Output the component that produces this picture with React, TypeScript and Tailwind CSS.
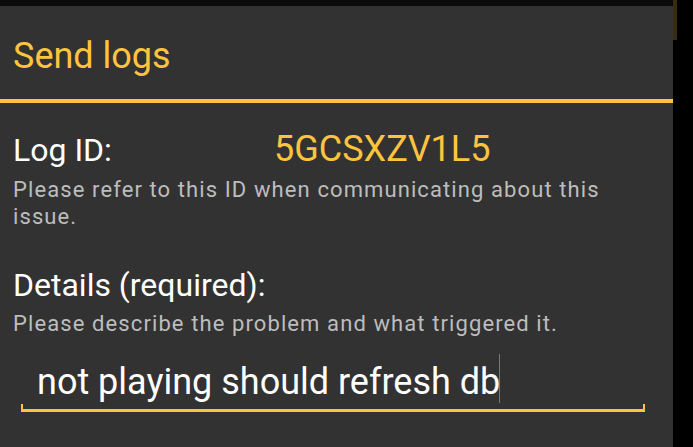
import React from "react";

export default function App() {
  const font = { fontFamily: "Roboto, 'Noto Sans', sans-serif" };
  return (
    <div className="w-[693px] h-[447px] bg-black flex overflow-hidden" style={font}>
      <div className="w-[673px] h-full flex flex-col">
        <div className="h-[6px] bg-[#0b0b0b]" />
        <div className="flex-1 bg-[#323232] flex flex-col">
          <div className="pt-[30px] pb-[23px] pl-[13px]">
            <div className="text-[36px] leading-[40px] text-[#fec43e]">Send logs</div>
          </div>
          <div className="h-[4px] bg-[#fec43e]" />
          <div className="pl-[13px] pt-[26px] flex flex-col">
            <div className="flex items-baseline">
              <div className="w-[261px] text-[32px] leading-[40px] text-white">Log ID:</div>
              <div className="text-[36px] leading-[40px] text-[#fec43e]">5GCSXZV1L5</div>
            </div>
            <div className="mt-[7px] max-w-[610px] text-[22px] leading-[26.6px] tracking-[1.1px] text-[#bdbdbd]">
              Please refer to this ID when communicating about this issue.
            </div>
            <div className="mt-[35px] text-[32px] leading-[40px] text-white">Details (required):</div>
            <div className="mt-[6px] text-[22px] leading-[26.6px] tracking-[1.1px] text-[#bdbdbd]">
              Please describe the problem and what triggered it.
            </div>
            <div className="mt-[16px] ml-[8px] w-[624px] flex flex-col">
              <div className="pl-[16px] text-[36px] leading-[50px] text-white whitespace-nowrap">
                not playing should refresh db
                <span className="inline-block w-[1px] h-[49px] bg-[#777] align-[-9px] ml-[-1px]" />
              </div>
              <div className="mt-[-3px] h-[8px] border-x-[2px] border-b-[3px] border-[#fec43e]" />
            </div>
          </div>
        </div>
      </div>
      <div className="w-[20px] h-full">
        <div className="w-[4px] h-[40px] bg-[#3a2c10]" />
      </div>
    </div>
  );
}
